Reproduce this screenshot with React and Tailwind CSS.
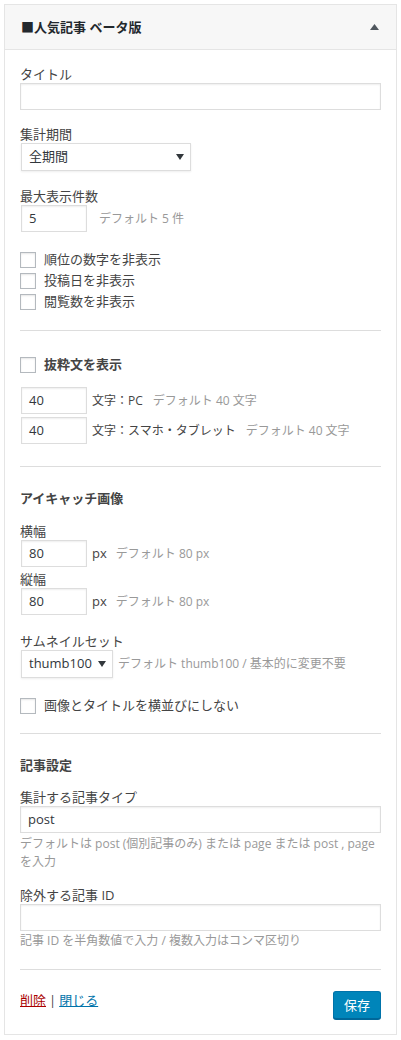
import React from 'react';

const font = { fontFamily: '"Open Sans", "Noto Sans CJK JP", sans-serif' };

const TextInput = ({ value = '', className = '' }) => (
  <div
    className={`h-[27px] border border-[#ddd] bg-white shadow-[inset_0_1px_2px_rgba(0,0,0,0.07)] flex items-center px-[7px] text-[13px] text-[#32373c] ${className}`}
  >
    {value}
  </div>
);

const Select = ({ value, className = '' }) => (
  <div
    className={`h-[28px] border border-[#ddd] bg-white shadow-[0_1px_2px_rgba(0,0,0,0.07)] flex items-center justify-between pl-[7px] pr-[6px] text-[13px] text-[#32373c] ${className}`}
  >
    <span>{value}</span>
    <svg width="8" height="6" viewBox="0 0 8 6" className="shrink-0">
      <path d="M0 0 H8 L4 6 Z" fill="#32373c" />
    </svg>
  </div>
);

const Check = ({ label, bold = false, className = '' }) => (
  <label className={`flex items-center h-[21px] gap-[8px] ${className}`}>
    <span className="w-[16px] h-[16px] border border-[#b4b9be] bg-white shadow-[inset_0_1px_2px_rgba(0,0,0,0.1)] shrink-0" />
    <span className={`text-[13px] text-[#444] ${bold ? 'font-bold' : ''}`}>{label}</span>
  </label>
);

const Label = ({ children, className = '' }) => (
  <p className={`text-[13px] leading-[18px] text-[#444] ${className}`}>{children}</p>
);

const Hint = ({ children, className = '' }) => (
  <span className={`text-[12px] leading-[18px] text-[#999] ${className}`}>{children}</span>
);

const Divider = ({ className = '' }) => <div className={`h-px bg-[#ddd] ${className}`} />;

export default function App() {
  return (
    <div className="bg-white min-h-[1040px] pt-[4px] px-[4px]" style={font}>
      <div className="border border-[#e5e5e5] bg-white">
        {/* Header */}
        <div className="h-[45px] bg-[#f7f7f7] border-b border-[#e5e5e5] flex items-center justify-between pl-[16px] pr-[17px]">
          <h3 className="text-[13px] font-bold text-[#23282d] pt-[2px]">■人気記事 ベータ版</h3>
          <svg width="9" height="6" viewBox="0 0 9 6">
            <path d="M0 6 L4.5 0 L9 6 Z" fill="#50575e" />
          </svg>
        </div>

        {/* Body */}
        <div className="px-[15px] pt-[15px] pb-[15px]">
          <Label>タイトル</Label>
          <TextInput />

          <Label className="mt-[15px]">集計期間</Label>
          <Select value="全期間" className="w-[170px] ml-px" />

          <Label className="mt-[16px]">最大表示件数</Label>
          <div className="flex items-center gap-[12px]">
            <TextInput value="5" className="w-[66px] ml-px" />
            <Hint>デフォルト 5 件</Hint>
          </div>

          <div className="mt-[17px]">
            <Check label="順位の数字を非表示" />
            <Check label="投稿日を非表示" />
            <Check label="閲覧数を非表示" />
          </div>

          <Divider className="mt-[18px]" />

          <Check label="抜粋文を表示" bold className="mt-[23px]" />

          <div className="mt-[12px] flex items-center">
            <TextInput value="40" className="w-[66px] ml-px" />
            <span className="ml-[5px] text-[12px] text-[#444]">文字：PC</span>
            <Hint className="ml-[10px]">デフォルト 40 文字</Hint>
          </div>
          <div className="mt-[3px] flex items-center">
            <TextInput value="40" className="w-[66px] ml-px" />
            <span className="ml-[5px] text-[12px] text-[#444]">文字：スマホ・タブレット</span>
            <Hint className="ml-[10px]">デフォルト 40 文字</Hint>
          </div>

          <Divider className="mt-[22px]" />

          <Label className="mt-[22px] font-bold">アイキャッチ画像</Label>

          <Label className="mt-[15px]">横幅</Label>
          <div className="flex items-center">
            <TextInput value="80" className="w-[66px] ml-px" />
            <span className="ml-[5px] text-[13px] text-[#444]">px</span>
            <Hint className="ml-[9px]">デフォルト 80 px</Hint>
          </div>
          <Label className="mt-[3px]">縦幅</Label>
          <div className="flex items-center">
            <TextInput value="80" className="w-[66px] ml-px" />
            <span className="ml-[5px] text-[13px] text-[#444]">px</span>
            <Hint className="ml-[9px]">デフォルト 80 px</Hint>
          </div>

          <Label className="mt-[17px]">サムネイルセット</Label>
          <div className="flex items-center gap-[5px]">
            <Select value="thumb100" className="w-[92px] ml-px" />
            <Hint>デフォルト thumb100 / 基本的に変更不要</Hint>
          </div>

          <Check label="画像とタイトルを横並びにしない" className="mt-[17px]" />

          <Divider className="mt-[17px]" />

          <Label className="mt-[22px] font-bold">記事設定</Label>

          <Label className="mt-[14px]">集計する記事タイプ</Label>
          <TextInput value="post" />
          <p className="mt-[2px] text-[12px] leading-[18px] text-[#999]">
            デフォルトは post (個別記事のみ) または page または post , page を入力
          </p>

          <Label className="mt-[15px]">除外する記事 ID</Label>
          <TextInput />
          <p className="mt-[1px] text-[12px] leading-[18px] text-[#999]">
            記事 ID を半角数値で入力 / 複数入力はコンマ区切り
          </p>

          <Divider className="mt-[19px]" />

          <div className="mt-[21px] flex items-start justify-between">
            <p className="text-[13px] leading-[18px] text-[#444]">
              <a href="#" className="text-[#a00] underline">削除</a>
              <span className="mx-[3px]">|</span>
              <a href="#" className="text-[#0073aa] underline">閉じる</a>
            </p>
            <button className="h-[28px] px-[10px] rounded-[3px] bg-[#0085ba] border border-[#0073aa] border-b-[#006799] shadow-[0_1px_0_#006799] text-white text-[13px] leading-[26px]">
              保存
            </button>
          </div>
        </div>
      </div>
    </div>
  );
}
